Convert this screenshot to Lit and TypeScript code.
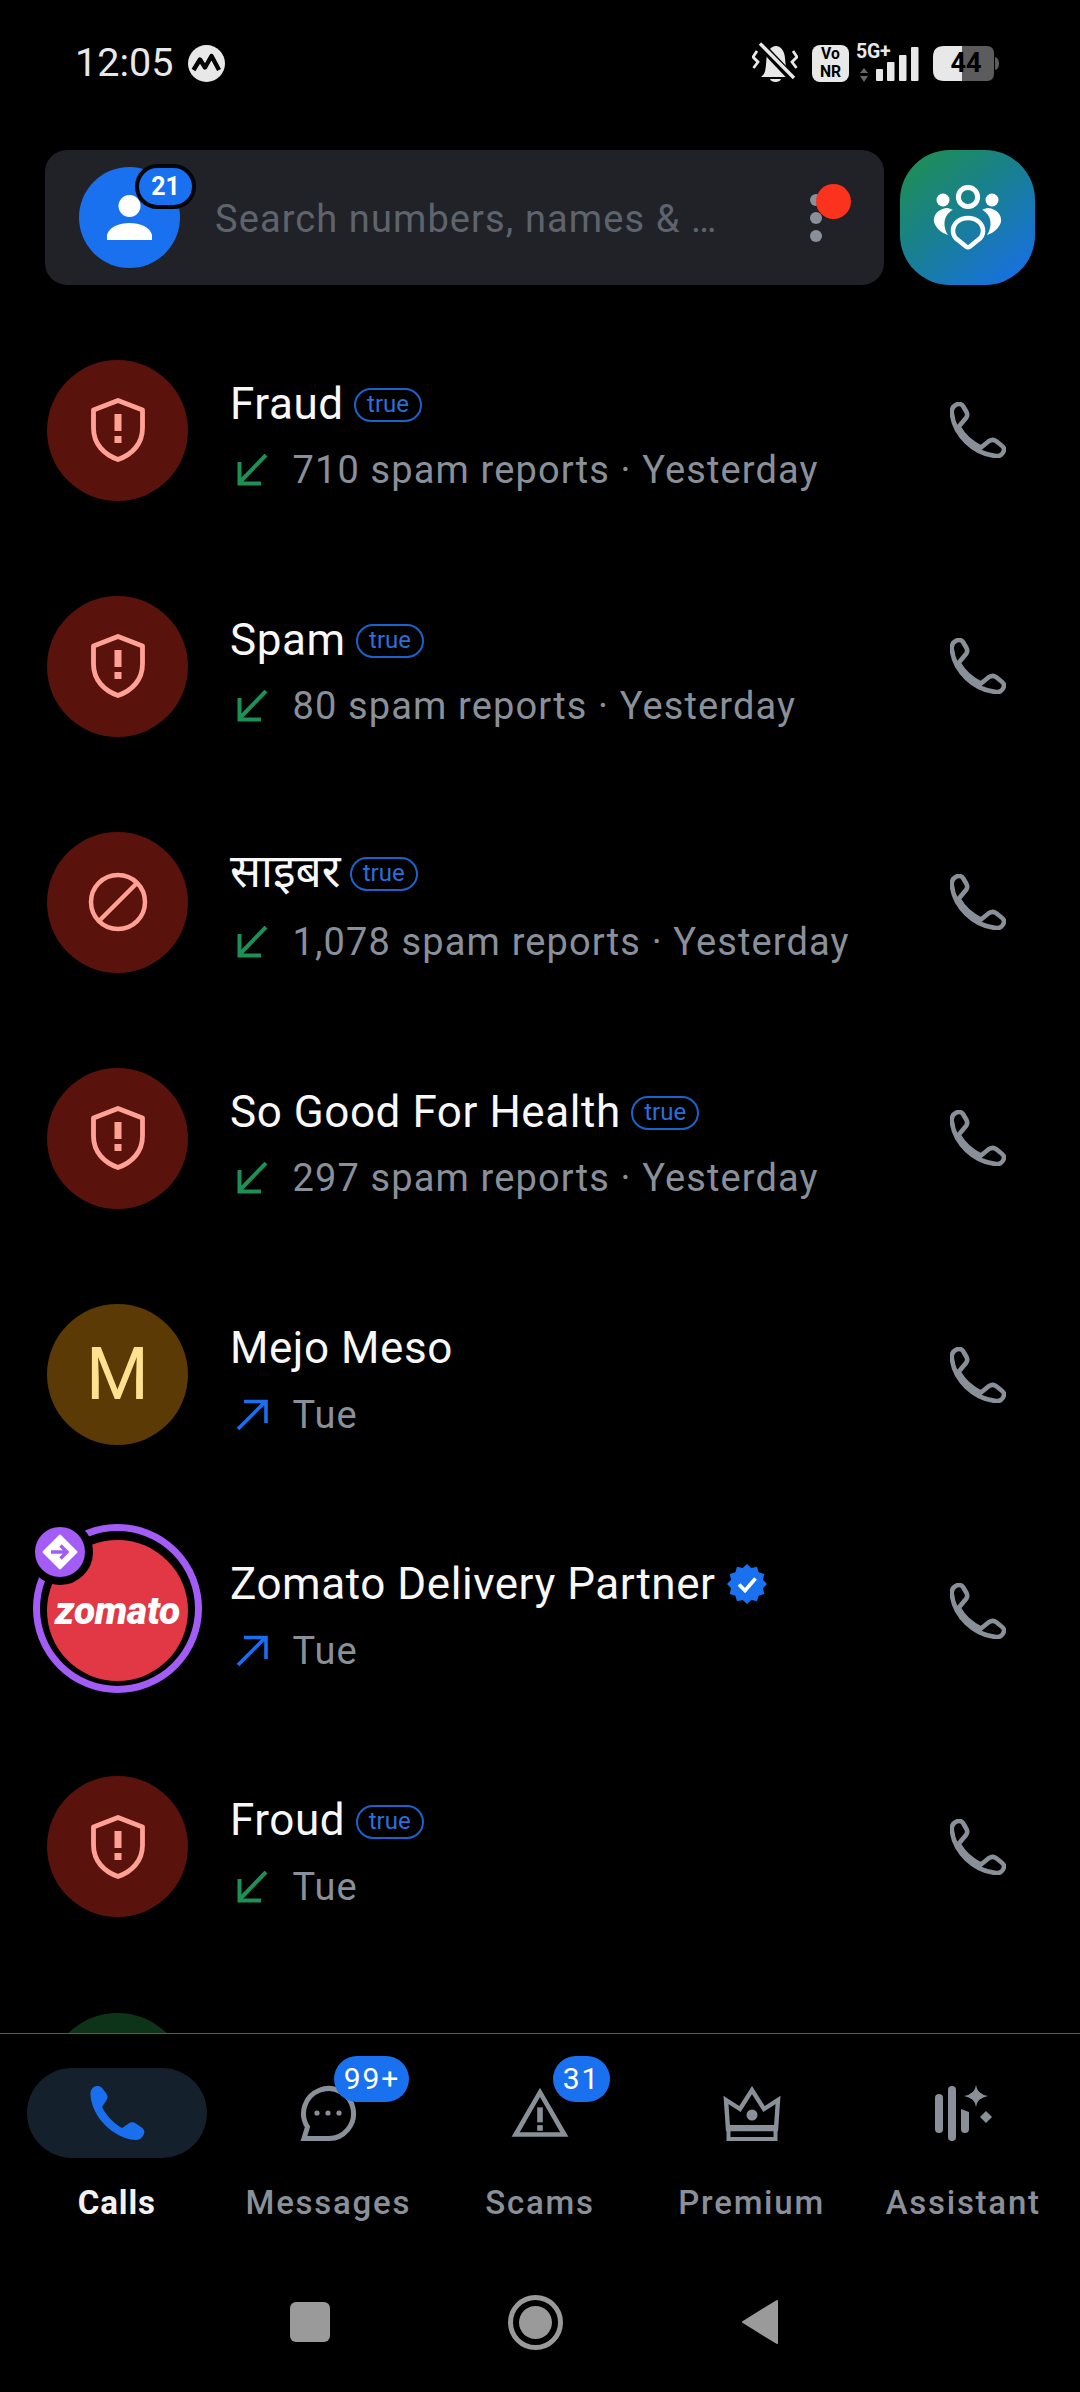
import { LitElement, html, css, svg } from "lit";
import { customElement } from "lit/decorators.js";

type Row = {
  name: string;
  kind: "shield" | "ban" | "letter" | "zomato";
  tag?: boolean;
  verified?: boolean;
  dir: "in" | "out";
  sub: string;
  hindi?: boolean;
};

const rows: Row[] = [
  { name: "Fraud", kind: "shield", tag: true, dir: "in", sub: "710 spam reports · Yesterday" },
  { name: "Spam", kind: "shield", tag: true, dir: "in", sub: "80 spam reports · Yesterday" },
  { name: "साइबर", kind: "ban", tag: true, dir: "in", sub: "1,078 spam reports · Yesterday", hindi: true },
  { name: "So Good For Health", kind: "shield", tag: true, dir: "in", sub: "297 spam reports · Yesterday" },
  { name: "Mejo Meso", kind: "letter", dir: "out", sub: "Tue" },
  { name: "Zomato Delivery Partner", kind: "zomato", verified: true, dir: "out", sub: "Tue" },
  { name: "Froud", kind: "shield", tag: true, dir: "in", sub: "Tue" },
];

const scallop = (() => {
  const pts: string[] = [];
  const n = 12;
  for (let i = 0; i < n * 2; i++) {
    const r = i % 2 === 0 ? 20 : 16.5;
    const a = (Math.PI * i) / n - Math.PI / 2;
    pts.push(`${(20 + r * Math.cos(a)).toFixed(2)},${(20 + r * Math.sin(a)).toFixed(2)}`);
  }
  return pts.join(" ");
})();

const shield = svg`<svg class="ic-shield" viewBox="0 0 54 64"><path d="M27 2.5 L51.5 12 V30 C51.5 46 41 56.5 27 61.5 C13 56.5 2.5 46 2.5 30 V12 Z" fill="none" stroke="currentColor" stroke-width="4.8" stroke-linejoin="round"/><rect x="23.5" y="16" width="7" height="17" fill="currentColor"/><rect x="23.5" y="38" width="7" height="7" fill="currentColor"/></svg>`;
const ban = svg`<svg class="ic-ban" viewBox="0 0 60 60"><circle cx="30" cy="30" r="27" fill="none" stroke="currentColor" stroke-width="4.5"/><path d="M11 49 L49 11" stroke="currentColor" stroke-width="4.5"/></svg>`;
const arrowIn = svg`<svg class="arrow in" viewBox="0 0 32 32"><path d="M30 1 L4 28 M3.5 8 V29.5 H25" fill="none" stroke="currentColor" stroke-width="4"/></svg>`;
const arrowOut = svg`<svg class="arrow out" viewBox="0 0 32 32"><path d="M2 30 L29 3 M8 2.5 H30 V24" fill="none" stroke="currentColor" stroke-width="3.6"/></svg>`;
const phoneLine = svg`<svg class="call" viewBox="0 0 56 56"><path d="M9 2 C5 2 1 6 1.8 11 C4 33 24 52 46 54 C50 54.5 53 52 54 48 C54.5 46 53 44.5 51 43 L46 39 C44 37.5 41.5 37.5 39 39 L31 45.5 C21 41 13 33 8.5 25 L16 16 C17.5 14 17.5 12 16.5 10 L13 4 C12 2.5 11 2 9 2 Z" fill="none" stroke="currentColor" stroke-width="4.6" stroke-linejoin="round"/></svg>`;

@customElement("app-root")
export class AppRoot extends LitElement {
  static styles = css`
    :host {
      display: flex;
      flex-direction: column;
      width: 1080px;
      height: 2392px;
      background: #000;
      overflow: hidden;
      font-family: Roboto, "Noto Sans", "Noto Sans Devanagari", sans-serif;
      color: #fff;
    }
    .status {
      height: 126px;
      flex: none;
      display: flex;
      align-items: center;
      padding: 0 81px 0 75px;
      color: #e8e8e8;
    }
    .time { font-size: 39.5px; line-height: 1; }
    .logo { width: 37px; height: 37px; margin-left: 15px; }
    .spacer { flex: 1; }
    .bell { width: 46px; height: 42px; }
    .vonr {
      width: 37px; height: 37px; margin-left: 14px; background: #e8e8e8; border-radius: 8px;
      color: #000; font-size: 15.7px; font-weight: 700; line-height: 18.5px;
      display: flex; align-items: center; justify-content: center; text-align: center;
    }
    .net { margin-left: 7px; width: 64px; height: 38px; display: flex; flex-direction: column; position: relative; }
    .fiveg { font-size: 19.5px; font-weight: 700; line-height: 15px; letter-spacing: -0.2px; }
    .signal { position: absolute; left: 0; top: 0; width: 64px; height: 38px; }
    .battery { margin-left: 13px; width: 66px; height: 35px; display: flex; position: relative; align-items: center; }
    .batsvg { position: absolute; inset: 0; width: 66px; height: 35px; }
    .battxt { position: relative; width: 60px; text-align: center; color: #000; font-weight: 700; font-size: 27px; line-height: 35px; padding-left: 3px; }

    .top { flex: none; display: flex; gap: 16px; padding: 24px 45px 0; height: 135px; box-sizing: content-box; }
    .search {
      width: 839px; height: 135px; background: #212227; border-radius: 22px;
      display: flex; align-items: center; padding-left: 34px; box-sizing: border-box; position: relative;
    }
    .me { width: 101px; height: 101px; border-radius: 50%; background: #1a71ef; position: relative; flex: none; display: flex; align-items: center; justify-content: center; }
    .me svg { width: 45px; height: 45px; }
    .me-badge {
      position: absolute; left: 56px; top: -3px; width: 61px; height: 45px; box-sizing: border-box;
      border: 4px solid #05060a; border-radius: 23px; background: #1a71ef; color: #fff;
      font-size: 25px; font-weight: 700; line-height: 37px; text-align: center;
    }
    .ph { margin-left: 35px; margin-top: 3px; font-size: 38px; letter-spacing: 1.1px; color: #5e646d; white-space: nowrap; }
    .dots { position: absolute; left: 765px; top: 44px; display: flex; flex-direction: column; gap: 6px; }
    .dots i { width: 12px; height: 12px; border-radius: 50%; background: #8a9099; display: block; }
    .red { position: absolute; left: 771px; top: 34px; width: 35px; height: 35px; border-radius: 50%; background: #fa321e; }
    .team {
      width: 135px; height: 135px; flex: none; border-radius: 50px;
      background: linear-gradient(140deg, #1f8f52 5%, #18808f 45%, #176fe6 95%);
      display: flex; align-items: center; justify-content: center;
    }
    .team svg { width: 70px; height: 65px; }

    .list { flex: 1; min-height: 0; overflow: hidden; padding-top: 27px; }
    .row { height: 236.15px; display: flex; align-items: center; padding-left: 47px; box-sizing: border-box; }
    .av {
      width: 141px; height: 141px; border-radius: 50%; flex: none; position: relative;
      display: flex; align-items: center; justify-content: center;
    }
    .av.red-av { background: #5a130c; color: #ffa195; }
    .av.letter { background: #5b3a06; color: #ffe28f; font-size: 72px; line-height: 1; }
    .av.green { background: #0d3319; }
    .av.zom { background: #e23744; }
    .ring { position: absolute; left: -14px; top: -16px; width: 169px; height: 169px; box-sizing: border-box; border: 7px solid #a35cf5; border-radius: 50%; }
    .zbadge {
      position: absolute; left: -20px; top: -21px; width: 66px; height: 66px; box-sizing: border-box;
      border: 8px solid #000; border-radius: 50%; background: #a35cf5; display: flex; align-items: center; justify-content: center;
    }
    .zbadge svg { width: 36px; height: 36px; }
    .ztext { position: relative; font-weight: 900; font-style: italic; font-size: 39px; color: #fff; letter-spacing: -0.3px; }
    .ic-shield { width: 54px; height: 64px; }
    .ic-ban { width: 60px; height: 60px; }
    .info { flex: 1; min-width: 0; margin-left: 42px; padding-top: 13.5px; display: flex; flex-direction: column; }
    .nameline { display: flex; align-items: center; height: 62px; }
    .name { font-size: 44px; letter-spacing: 0.55px; line-height: 62px; color: #f8f8f8; white-space: nowrap; }
    .name.hi { font-size: 46px; letter-spacing: 0; margin-top: -10px; }
    .tag {
      margin-left: 10.5px; width: 68px; height: 34px; box-sizing: border-box; border: 2.5px solid #1a62cc; border-radius: 17px;
      color: #2a6fdc; font-size: 24px; line-height: 28px; text-align: center; margin-top: 3px;
    }
    .hi + .tag { margin-top: -4px; margin-left: 9px; }
    .verified { width: 40px; height: 40px; margin-left: 11px; }
    .subline { display: flex; align-items: center; height: 62px; margin-top: 4.5px; color: #8a9099; }
    .arrow { width: 32px; height: 32px; margin-left: 6px; flex: none; }
    .arrow.in { color: #1e8f55; }
    .arrow.out { color: #1a6fef; }
    .sub { margin-left: 24.5px; font-size: 38px; letter-spacing: 1.13px; white-space: nowrap; }
    .call { width: 56px; height: 56px; flex: none; margin-right: 74px; color: #8a9099; }

    .nav { flex: none; height: 359px; box-sizing: border-box; border-top: 1.5px solid #55585c; display: flex; flex-direction: column; }
    .tabs { display: grid; grid-template-columns: repeat(5, 1fr); padding: 34px 11px 0; }
    .tab { display: flex; flex-direction: column; align-items: center; }
    .icw { position: relative; width: 180px; height: 90px; display: flex; align-items: center; justify-content: center; color: #8a9099; border-radius: 45px; }
    .tab.on .icw { background: #14202c; color: #1a6fef; }
    .icw svg { width: 58px; height: 56px; }
    .nb {
      position: absolute; top: -12px; height: 46px; box-sizing: border-box; border-radius: 23px; background: #1a71ef; color: #fff;
      font-size: 30px; line-height: 46px; text-align: center; letter-spacing: 1.8px;
    }
    .nb.m { left: 96px; width: 75px; }
    .nb.s { left: 103px; width: 57px; }
    .label { margin-top: 24.5px; font-size: 33px; line-height: 40px; letter-spacing: 1.75px; color: #8a9099; font-weight: 500; white-space: nowrap; }
    .tab.on .label { color: #f2f2f2; font-weight: 700; letter-spacing: 0.9px; }
    .sys { flex: 1; display: flex; align-items: center; padding-left: 290px; padding-top: 30px; }
    .sq { width: 40px; height: 40px; border-radius: 6px; background: #9a9a9a; }
    .ci { width: 55px; height: 55px; margin-left: 178px; box-sizing: border-box; border: 5px solid #9a9a9a; border-radius: 50%; display: flex; align-items: center; justify-content: center; }
    .ci i { width: 33px; height: 33px; border-radius: 50%; background: #9a9a9a; display: block; }
    .tri { width: 38px; height: 46px; margin-left: 178px; }
  `;

  private avatar(r: Row) {
    if (r.kind === "shield") return html`<div class="av red-av">${shield}</div>`;
    if (r.kind === "ban") return html`<div class="av red-av">${ban}</div>`;
    if (r.kind === "letter") return html`<div class="av letter">M</div>`;
    return html`<div class="av zom">
      <div class="ring"></div>
      <span class="ztext">zomato</span>
      <div class="zbadge">
        <svg viewBox="0 0 36 36">
          <path d="M18 1.5 L34.5 18 L18 34.5 L1.5 18 Z" fill="#fff" stroke="#fff" stroke-width="2" stroke-linejoin="round"/>
          <path d="M9 18 H24 M18.5 11.5 L25 18 L18.5 24.5" fill="none" stroke="#a35cf5" stroke-width="3.4"/>
        </svg>
      </div>
    </div>`;
  }

  private row(r: Row) {
    return html`<div class="row">
      ${this.avatar(r)}
      <div class="info">
        <div class="nameline">
          <span class="name ${r.hindi ? "hi" : ""}">${r.name}</span>
          ${r.tag ? html`<span class="tag">true</span>` : ""}
          ${r.verified
            ? html`<svg class="verified" viewBox="0 0 40 40"><polygon points="${scallop}" fill="#1a71ef"/><path d="M12 20.5 L18 26.5 L28.5 14.5" fill="none" stroke="#fff" stroke-width="3.6"/></svg>`
            : ""}
        </div>
        <div class="subline">${r.dir === "in" ? arrowIn : arrowOut}<span class="sub">${r.sub}</span></div>
      </div>
      ${phoneLine}
    </div>`;
  }

  render() {
    return html`
      <div class="status">
        <span class="time">12:05</span>
        <svg class="logo" viewBox="0 0 37 37">
          <circle cx="18.5" cy="18.5" r="18.5" fill="#e8e8e8"/>
          <path d="M5.5 25 L12 14.5 L17 22.5 L23.5 11 L31 25" fill="none" stroke="#000" stroke-width="4.4" stroke-linejoin="round"/>
        </svg>
        <span class="spacer"></span>
        <svg class="bell" viewBox="0 0 46 42">
          <path d="M12 32 C14 28 14 22 14.5 16 C15 9 19 4 24 4 C29 4 32.5 9 33 16 C33.5 22 34 28 36 32 L38 35 H9 Z" fill="#e8e8e8"/>
          <path d="M18 37 H29 C28 41 19 41 18 37 Z" fill="#e8e8e8"/>
          <path d="M7 1 L41 37" stroke="#000" stroke-width="8"/>
          <path d="M8 1.5 L42 36" stroke="#e8e8e8" stroke-width="3.4"/>
          <path d="M5 9 L1 15 L6 20 L1.5 26 M41 9 L45 15 L40 20 L44.5 26" fill="none" stroke="#e8e8e8" stroke-width="2.8"/>
        </svg>
        <div class="vonr">Vo<br />NR</div>
        <div class="net">
          <span class="fiveg">5G+</span>
          <svg class="signal" viewBox="0 0 64 38">
            <path d="M8 24 L12 29 H4 Z M8 38 L12 32 H4 Z" fill="#666"/>
            <rect x="20" y="25" width="7" height="12" rx="1" fill="#e8e8e8"/>
            <rect x="31" y="18" width="7.5" height="19" rx="1" fill="#e8e8e8"/>
            <rect x="43" y="11" width="7.5" height="26" rx="1" fill="#e8e8e8"/>
            <rect x="55" y="3" width="7.5" height="34" rx="1" fill="#e8e8e8"/>
          </svg>
        </div>
        <div class="battery">
          <svg class="batsvg" viewBox="0 0 66 35">
            <path d="M29 0 H54 Q61 0 61 8 V27 Q61 35 54 35 H29 Z" fill="#5c5c5c"/>
            <path d="M62 11 Q66 12 66 17.5 Q66 23 62 24 Z" fill="#5c5c5c"/>
            <path d="M29 0 H11 Q0 0 0 11 V24 Q0 35 11 35 H29 Z" fill="#e8e8e8"/>
          </svg>
          <span class="battxt">44</span>
        </div>
      </div>

      <div class="top">
        <div class="search">
          <div class="me">
            <svg viewBox="0 0 45 45">
              <circle cx="22.5" cy="11" r="11" fill="#fff"/>
              <path d="M0 45 V40 C2 32 12 28 22.5 28 C33 28 43 32 45 40 V45 Z" fill="#fff"/>
            </svg>
            <span class="me-badge">21</span>
          </div>
          <span class="ph">Search numbers, names &amp; …</span>
          <div class="dots"><i></i><i></i><i></i></div>
          <div class="red"></div>
        </div>
        <div class="team">
          <svg viewBox="0 0 70 65">
            <circle cx="35" cy="12" r="9.6" fill="none" stroke="#fff" stroke-width="5"/>
            <circle cx="10" cy="15" r="6.5" fill="#fff"/>
            <circle cx="59" cy="15" r="6.5" fill="#fff"/>
            <path d="M14 23 C5 24 0 30 1 37 C3 43 8 48 15 50 C11 44 10 36 14 30 C16 27 19 25 20 25 C18 24 16 23 14 23 Z" fill="#fff"/>
            <path d="M55 23 C64 24 69 30 68 37 C66 43 61 48 54 50 C58 44 59 36 55 30 C53 27 50 25 49 25 C51 24 53 23 55 23 Z" fill="#fff"/>
            <path d="M35 33 C43 33 50 38 50 46 C50 50 48 53 45 55 L37 61.5 Q35 63 33 61.5 L25 55 C22 53 20 50 20 46 C20 38 27 33 35 33 Z" fill="none" stroke="#fff" stroke-width="4.6" stroke-linejoin="round"/>
          </svg>
        </div>
      </div>

      <div class="list">
        ${rows.map((r) => this.row(r))}
        <div class="row"><div class="av green"></div></div>
      </div>

      <div class="nav">
        <div class="tabs">
          <div class="tab on">
            <div class="icw">
              <svg viewBox="0 0 56 56"><path d="M8 1 C4 1 1 5 1.5 10 C3 32 24 53 46 55 C50 55.5 53 53 55 49 C56 46 55 44 52 42 L46 38 C44 36.5 41 37 39 39 L33 43 C24 38 17 30 13 22 L17 16 C19 13 19 11 17 8 L13 3 C12 1.5 10 1 8 1 Z" fill="currentColor"/></svg>
            </div>
            <div class="label">Calls</div>
          </div>
          <div class="tab">
            <div class="icw">
              <svg viewBox="0 0 58 56">
                <path d="M5 53.5 L8.5 42 A25 25 0 1 1 29 53.5 Z" fill="none" stroke="currentColor" stroke-width="5"/>
                <circle cx="18" cy="28" r="2.6" fill="currentColor"/><circle cx="29" cy="28" r="2.6" fill="currentColor"/><circle cx="40" cy="28" r="2.6" fill="currentColor"/>
              </svg>
              <span class="nb m">99+</span>
            </div>
            <div class="label">Messages</div>
          </div>
          <div class="tab">
            <div class="icw">
              <svg viewBox="0 0 62 56"><path d="M31 6 L57 51 H5 Z" fill="none" stroke="currentColor" stroke-width="5"/><rect x="28" y="22" width="6" height="16" fill="currentColor"/><rect x="28" y="41" width="6" height="6" fill="currentColor"/></svg>
              <span class="nb s">31</span>
            </div>
            <div class="label">Scams</div>
          </div>
          <div class="tab">
            <div class="icw">
              <svg viewBox="0 0 58 56">
                <path d="M3 15 L17 24 L29 5 L41 24 L55 15 L53 44 H5 Z" fill="none" stroke="currentColor" stroke-width="4.4"/>
                <rect x="3.5" y="40" width="51" height="5" fill="currentColor"/>
                <rect x="5.5" y="44" width="47" height="10" fill="none" stroke="currentColor" stroke-width="4"/>
                <circle cx="29" cy="30" r="5.5" fill="currentColor"/>
              </svg>
            </div>
            <div class="label">Premium</div>
          </div>
          <div class="tab">
            <div class="icw">
              <svg viewBox="0 0 58 56">
                <rect x="1" y="9" width="8" height="39" rx="4" fill="currentColor"/>
                <rect x="14" y="1" width="8" height="55" rx="4" fill="currentColor"/>
                <path d="M27 24 L35 27 V44 A4 4 0 0 1 27 44 Z" fill="currentColor"/>
                <path d="M42 0 Q43 9 54 11 Q43 13 42 22 Q41 13 30 11 Q41 9 42 0 Z" fill="currentColor"/>
                <path d="M52 26 L58 32 L52 38 L46 32 Z" fill="currentColor"/>
              </svg>
            </div>
            <div class="label">Assistant</div>
          </div>
        </div>
        <div class="sys">
          <div class="sq"></div>
          <div class="ci"><i></i></div>
          <svg class="tri" viewBox="0 0 38 46"><path d="M36 2 V44 L2 23 Z" fill="#9a9a9a" stroke="#9a9a9a" stroke-width="2" stroke-linejoin="round"/></svg>
        </div>
      </div>
    `;
  }
}
